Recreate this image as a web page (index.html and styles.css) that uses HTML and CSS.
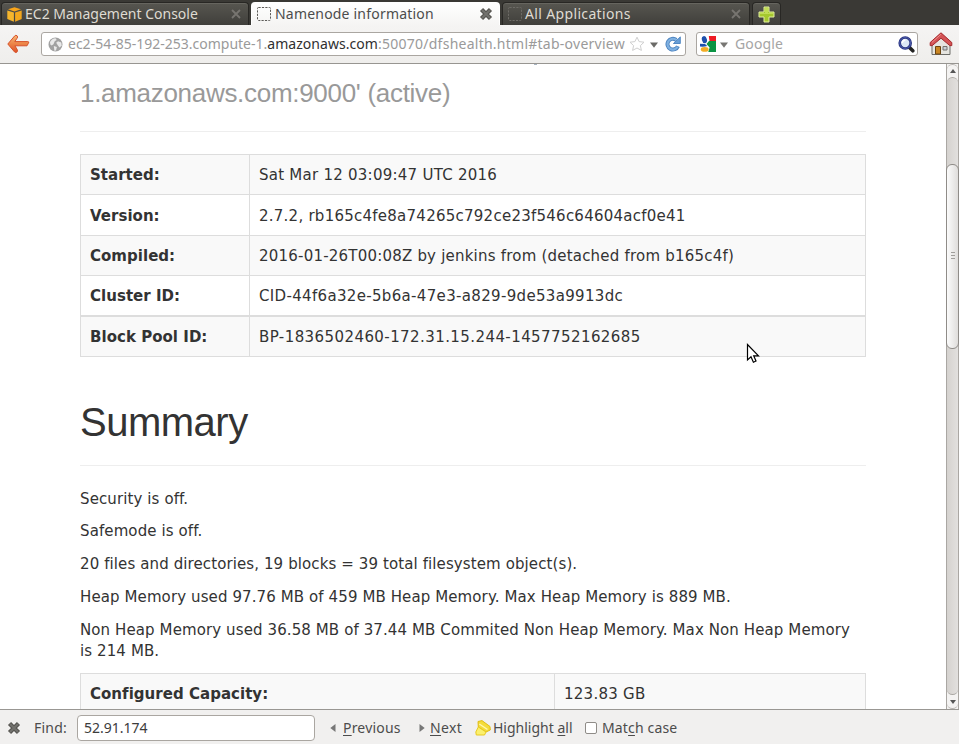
FILE: index.html
```
<!DOCTYPE html>
<html lang="en">
<head>
<meta charset="utf-8">
<title>Namenode information</title>
<link rel="stylesheet" href="styles.css">
</head>
<body>
<div class="tabs">
  <div class="tab">
    <svg class="cube" width="15" height="15" viewBox="0 0 15 15"><path d="M.3 3.6 6.9 5.6V14.7L.3 12z" fill="#f5b52c"/><path d="M14.7 3.6 8.1 5.6V14.7L14.7 12z" fill="#f2a71d"/><path d="M1 2.3 7.5.2 14 2.3 7.5 4.4z" fill="#f9a51a"/></svg>
    <span class="label">EC2 Management Console</span>
    <svg class="close" width="12" height="12" viewBox="0 0 12 12"><path d="M2 2 10 10M10 2 2 10" stroke="#777570" stroke-width="1.8"/></svg>
  </div>
  <div class="tab active">
    <svg width="14" height="14" viewBox="0 0 14 14"><rect x=".5" y=".5" width="13" height="13" rx="1" fill="none" stroke="#5c5b58" stroke-dasharray="2.2 1.2"/></svg>
    <span class="label name">Namenode information</span>
    <svg class="close" width="14" height="14" viewBox="0 0 14 14"><path d="M2.5 2.5 11.5 11.5M11.5 2.5 2.5 11.5" stroke="#555450" stroke-width="4.4"/><path d="M3 3 11 11M11 3 3 11" stroke="#73726e" stroke-width="2"/></svg>
  </div>
  <div class="tab">
    <svg width="14" height="14" viewBox="0 0 14 14"><rect x=".5" y=".5" width="13" height="13" rx="1" fill="none" stroke="#6d6b66" stroke-dasharray="2.2 1.2"/></svg>
    <span class="label apps">All Applications</span>
    <svg class="close" width="12" height="12" viewBox="0 0 12 12"><path d="M2 2 10 10M10 2 2 10" stroke="#777570" stroke-width="1.8"/></svg>
  </div>
  <div class="tab add">
    <svg width="17" height="17" viewBox="0 0 17 17"><path d="M6 1h5v5h5v5h-5v5H6v-5H1V6h5z" fill="#a5c82e" stroke="#e2ee9e"/><path d="M7 2h3v5h5v1H2V7h5z" fill="#c1dc55"/></svg>
  </div>
</div>
<div class="nav">
  <svg class="back" width="24" height="20" viewBox="0 0 24 20"><defs><linearGradient id="bk" x2="0" y2="1"><stop offset="0" stop-color="#f8b877"/><stop offset=".5" stop-color="#ec8447"/><stop offset="1" stop-color="#dd5228"/></linearGradient></defs><path d="M.8 10 7.6 2Q8.9.6 10.1 1.8T10 4.3L7.8 7.6H20.8Q22.6 7.8 21.4 9.2L20 11.8H7.9L10.2 15.5Q11 17.4 9.8 18.2T7.6 18z" fill="url(#bk)" stroke="#d7522b" stroke-linejoin="round"/></svg>
  <div class="field url">
    <svg class="globe" width="15" height="15" viewBox="0 0 15 15"><circle cx="7.5" cy="7.5" r="7" fill="#a1a1a1"/><path d="M2 5Q4 1.5 7.5 1.3L8.7 3 6.7 4.3 5.5 7.2 3.6 8.6 2.3 7.5zM8.2 5.7 10 4.2 13.3 5.6 13.7 8.7 11.4 10.5 9.8 8.2zM5.8 9 8.9 10.1 8 13.4 6.4 13.7z" fill="#e9e9e9"/></svg>
    <span class="address"><span class="sub">ec2-54-85-192-253.compute-1.</span><b>amazonaws.com</b><span class="path">:50070/dfshealth.html#tab-overview</span></span>
    <svg width="16" height="16" viewBox="0 0 16 16"><path d="M8 1.2 10.1 5.6 15 6.2 11.4 9.6 12.4 14.4 8 12 3.6 14.4 4.6 9.6 1 6.2 5.9 5.6z" fill="#fff" stroke="#cfcfcf"/></svg>
    <svg class="arrow" width="8" height="6" viewBox="0 0 8 6"><path d="M0 .5H8L4 5.8z" fill="#6b6a67"/></svg>
    <svg class="reload" width="16" height="16" viewBox="0 0 16 16"><path d="M11.2 3.9A5.4 5.4 0 1 0 12.9 10.2" fill="none" stroke="#4a82bf" stroke-width="4"/><path d="M15.3.9V7.5H8.4z" fill="#6a9fd6" stroke="#4a82bf" stroke-width=".9"/><path d="M11.2 3.9A5.4 5.4 0 1 0 12.6 10.8" fill="none" stroke="#7fb0e0" stroke-width="2.2"/></svg>
  </div>
  <div class="field search">
    <svg width="16" height="16" viewBox="0 0 16 16"><path d="M0 0H16V16H0z" fill="#fff"/><path d="M8.8 0H16V5H9.5z" fill="#ee1c25"/><path d="M9 5H16V16H8.3L9.6 11.5 6.5 8z" fill="#0b9444"/><ellipse cx="4.4" cy="3.7" rx="2.5" ry="3.7" transform="rotate(-15 4.4 3.7)" fill="#1e50ac"/><path d="M0 7.8 5 8 7.3 10Q4 11 0 10.5z" fill="#1e50ac"/><ellipse cx="4.7" cy="13.4" rx="3.9" ry="2.4" fill="#f2ad25"/></svg>
    <svg class="arrow" width="8" height="6" viewBox="0 0 8 6"><path d="M0 .5H8L4 5.8z" fill="#777673"/></svg>
    <span class="hint">Google</span>
    <svg width="17" height="17" viewBox="0 0 17 17"><path d="M11.5 11.5 14.8 14.8" stroke="#222" stroke-width="3.6" stroke-linecap="round"/><circle cx="7.2" cy="7" r="5.5" fill="#dce7f5" stroke="#27327f" stroke-width="2.6"/><circle cx="7.2" cy="7" r="5.5" fill="none" stroke="#5a6cba" stroke-width=".7"/><path d="M4.2 7Q4.5 4.3 7.4 4" stroke="#fff" stroke-width="1.5" fill="none"/></svg>
  </div>
  <svg class="home" width="24" height="24" viewBox="0 0 24 24"><path d="M3 11 12 4 21 11V22.5H3z" fill="#e6e5e0" stroke="#6d6d69"/><path d="M6.5 14.5H11.5V22H6.5z" fill="#c98522" stroke="#6c4410"/><path d="M14 14.5H18V18H14z" fill="#c9d0d6" stroke="#73736f"/><path d="M12 .8 22.8 10.5V13.6H20.8L12 6.2 3.2 13.6H1.2V10.5z" fill="#d35355" stroke="#a5282c" stroke-linejoin="round"/><path d="M12 2.2 3 10.4" stroke="#ed8a8a"/></svg>
</div>
<div class="view">
  <div class="page">
    <h2>1.amazonaws.com:9000' (active)</h2>
    <i class="tail"></i>
    <div class="info">
      <b>Started:</b><span>Sat Mar 12 03:09:47 UTC 2016</span>
      <b class="low">Version:</b><span class="low">2.7.2, rb165c4fe8a74265c792ce23f546c64604acf0e41</span>
      <b>Compiled:</b><span class="compiled">2016-01-26T00:08Z by jenkins from (detached from b165c4f)</span>
      <b>Cluster ID:</b><span class="cid">CID-44f6a32e-5b6a-47e3-a829-9de53a9913dc</span>
      <b class="last">Block Pool ID:</b><span class="last pool">BP-1836502460-172.31.15.244-1457752162685</span>
    </div>
    <h1>Summary</h1>
    <p>Security is off.</p>
    <p>Safemode is off.</p>
    <p>20 files and directories, 19 blocks = 39 total filesystem object(s).</p>
    <p>Heap Memory used 97.76 MB of 459 MB Heap Memory. Max Heap Memory is 889 MB.</p>
    <p>Non Heap Memory used 36.58 MB of 37.44 MB Commited Non Heap Memory. Max Non Heap Memory<br>is 214 MB.</p>
    <div class="info capacity"><b>Configured Capacity:</b><span>123.83 GB</span></div>
  </div>
  <div class="scroll">
    <div class="btn up"><svg width="6" height="4" viewBox="0 0 6 4"><path d="M0 4 3 0 6 4z" fill="#555"/></svg></div>
    <div class="track"><div class="thumb"><i></i><i></i><i></i></div></div>
    <div class="btn down"><svg width="6" height="4" viewBox="0 0 6 4"><path d="M0 0 3 4 6 0z" fill="#555"/></svg></div>
  </div>
  <svg class="cursor" width="15" height="22" viewBox="0 0 15 22"><path d="M1.5 1.5V17L5 13.8 7.4 19.2 10 18 7.7 12.8H12.5z" fill="#fff" stroke="#000" stroke-width="1.2"/></svg>
</div>
<div class="find">
  <svg width="14" height="14" viewBox="0 0 14 14"><path d="M2.5 2.5 11.5 11.5M11.5 2.5 2.5 11.5" stroke="#555450" stroke-width="4.4"/><path d="M3 3 11 11M11 3 3 11" stroke="#73726e" stroke-width="2"/></svg>
  <span class="flabel">Find:</span>
  <div class="input">52.91.174</div>
  <svg class="prev" width="6" height="8" viewBox="0 0 6 8"><path d="M5.5 0V8L.3 4z" fill="#777"/></svg>
  <span class="previous"><u>P</u>revious</span>
  <svg class="nexticon" width="6" height="8" viewBox="0 0 6 8"><path d="M.5 0V8L5.7 4z" fill="#777"/></svg>
  <span class="next"><u>N</u>ext</span>
  <svg class="pen" width="16" height="16" viewBox="0 0 16 16"><path d="M3 1.5 7 .6 15 6.5 15.3 10 11 12 3.3 7z" fill="#f4dc3a" stroke="#e0bd15"/><path d="M3.3 7 11 12 9.5 15H1.3L.8 12z" fill="#fbf06e" stroke="#e8c91e"/><path d="M4.3 4 12.5 9.5" stroke="#fff7ae" stroke-width="1.5"/></svg>
  <span class="high">Highlight <u>a</u>ll</span>
  <span class="check"></span>
  <span class="match">Mat<u>c</u>h case</span>
</div>
</body>
</html>
```
FILE: styles.css
```
* { box-sizing: border-box; }
html, body { margin: 0; height: 100%; }
body {
  display: flex;
  flex-direction: column;
  width: 959px;
  height: 744px;
  overflow: hidden;
  background: #fff;
  font: 14px/20px "Noto Sans", sans-serif;
  white-space: nowrap;
}
svg { display: block; flex: none; }

.tabs {
  display: flex;
  gap: 2px;
  flex: none;
  height: 25px;
  padding: 2px 0 0 1px;
  background: #3a3935;
}
.tab {
  display: flex;
  align-items: center;
  width: 248px;
  padding: 0 6px 0 7px;
  border: 1px solid #282724;
  border-bottom: 0;
  border-radius: 4px 4px 0 0;
  background: linear-gradient(#575650, #403f3b);
  box-shadow: inset 0 1px #66655f;
  color: #dfdbd2;
}
.tab .label { flex: 1; margin-left: 3px; }
.tab .name { letter-spacing: .2px; margin-left: 4px; }
.tab .apps { letter-spacing: .35px; margin-left: 3px; }
.tab .cube { margin-left: -2px; }
.tab.active {
  width: 249px;
  padding: 0 6px 0 5px;
  border-color: #fff;
  background: linear-gradient(#fff, #f5f4f3);
  box-shadow: none;
  color: #4c4c4c;
}
.tab:nth-child(3) { padding: 0 7px 0 5px; }
.tab.add { width: 29px; padding: 0; justify-content: center; }

.nav {
  display: flex;
  align-items: center;
  flex: none;
  height: 39px;
  padding: 0 4px 0 7px;
  border-bottom: 1px solid #979591;
  background: linear-gradient(#f5f4f3, #efeeec);
}
.field {
  display: flex;
  align-items: center;
  flex: none;
  height: 24px;
  border: 1px solid #aaa6a1;
  border-radius: 3px;
  background: #fff;
  color: #9a9a9a;
}
.url { width: 645px; margin-left: 10px; padding: 0 4px 0 6px; }
.address { flex: 1; margin-left: 5px; }
.address b { font-weight: 400; color: #303030; letter-spacing: .05px; }
.address .path { letter-spacing: .25px; }
.url .arrow { margin: 2px 7px 0 5px; }
.search { width: 222px; margin-left: 10px; padding: 0 2px 0 3px; }
.search .arrow { margin: 2px 7px 0 4px; }
.hint { flex: 1; letter-spacing: .15px; color: #a5a5a5; }
.home { margin-left: 11px; }

.view { position: relative; display: flex; flex: none; height: 645px; overflow: hidden; }
.page {
  width: 946px;
  padding: 0 80px;
  font: 15px/21px "DejaVu Sans", sans-serif;
  color: #333;
}
h2, h1 { margin: 0; font-family: "Liberation Sans", sans-serif; font-weight: 400; border-bottom: 1px solid #eee; }
h2 {
  height: 68px;
  margin-bottom: 22px;
  padding-top: 14px;
  font-size: 26px;
  line-height: 30px;
  letter-spacing: -.3px;
  color: #999;
}
.tail { position: absolute; left: 534px; top: 0; width: 3px; height: 1px; background: #a9b5c2; }
.info {
  display: grid;
  grid-template-columns: 170px 616px;
  grid-template-rows: 40px 41px 40px 40px 41px;
  height: 203px;
  border-top: 1px solid #ddd;
  letter-spacing: .25px;
}
.info > * { padding: 10px 9px 0; border-right: 1px solid #ddd; border-bottom: 1px solid #ddd; }
.info > .low { padding-top: 11px; }
.info > b { border-left: 1px solid #ddd; letter-spacing: .03px; }
.info > :nth-child(4n+1), .info > :nth-child(4n+2) { background: #f9f9f9; }
.info > .last { border-top: 1px solid #ddd; }
.info .compiled { letter-spacing: .21px; }
.info .cid { letter-spacing: .33px; }
.info .pool { letter-spacing: .42px; }
h1 {
  height: 109px;
  margin-bottom: 22.6px;
  padding-top: 42px;
  font-size: 40px;
  line-height: 46px;
  letter-spacing: -.5px;
}
p { margin: 0 0 11.8px; letter-spacing: .105px; }
.capacity { margin-top: -.6px; grid-template-columns: 475px 311px; grid-template-rows: 41px; }

.scroll {
  display: flex;
  flex-direction: column;
  width: 13px;
  border-left: 1px solid #aaa7a3;
  border-right: 1px solid #aaa7a3;
  background: #f4f3f2;
}
.btn { display: flex; align-items: center; justify-content: center; height: 14px; flex: none; }
.up { height: 13px; border-top: 1px solid #b8b5b1; border-radius: 6px 6px 0 0; }
.down { border-bottom: 1px solid #b8b5b1; border-radius: 0 0 6px 6px; }
.track {
  flex: 1;
  padding-top: 86px;
  border: solid #aaa7a3;
  border-width: 1px 0;
  border-radius: 6px;
  background: linear-gradient(90deg, #d5d2cf, #e2e0de);
}
.thumb {
  display: flex;
  flex-direction: column;
  align-items: center;
  justify-content: center;
  gap: 2px;
  height: 185px;
  padding-bottom: 2px;
  margin: 0 -1px;
  border: 1px solid #8f8c88;
  border-radius: 6px;
  background: linear-gradient(90deg, #fbfbfb, #dfdddb);
}
.thumb i { width: 4px; height: 1px; background: #a09e9b; }
.cursor { position: absolute; left: 746px; top: 279px; }

.find {
  display: flex;
  align-items: center;
  flex: none;
  height: 35px;
  padding: 1px 0 0 7px;
  border-top: 1px solid #999793;
  background: #f1f0ef;
  color: #4c4c4c;
}
.flabel { width: 43px; margin-left: 13px; letter-spacing: .2px; }
.input {
  width: 238px;
  height: 26px;
  padding: 2px 6px;
  border: 1px solid #aaa6a1;
  border-radius: 4px;
  background: #fff;
  color: #3c3c3c;
}
.prev { margin-left: 15px; }
.previous { width: 76px; margin-left: 7px; letter-spacing: .2px; }
.next { width: 45px; margin-left: 5px; letter-spacing: .4px; }
.high { width: 92px; margin-left: 2px; }
.check { width: 12px; height: 12px; border: 1px solid #8f8c88; border-radius: 2px; background: #fff; }
.match { margin-left: 5px; letter-spacing: .15px; }
u { text-underline-offset: 2px; text-decoration-thickness: 1px; }
```
